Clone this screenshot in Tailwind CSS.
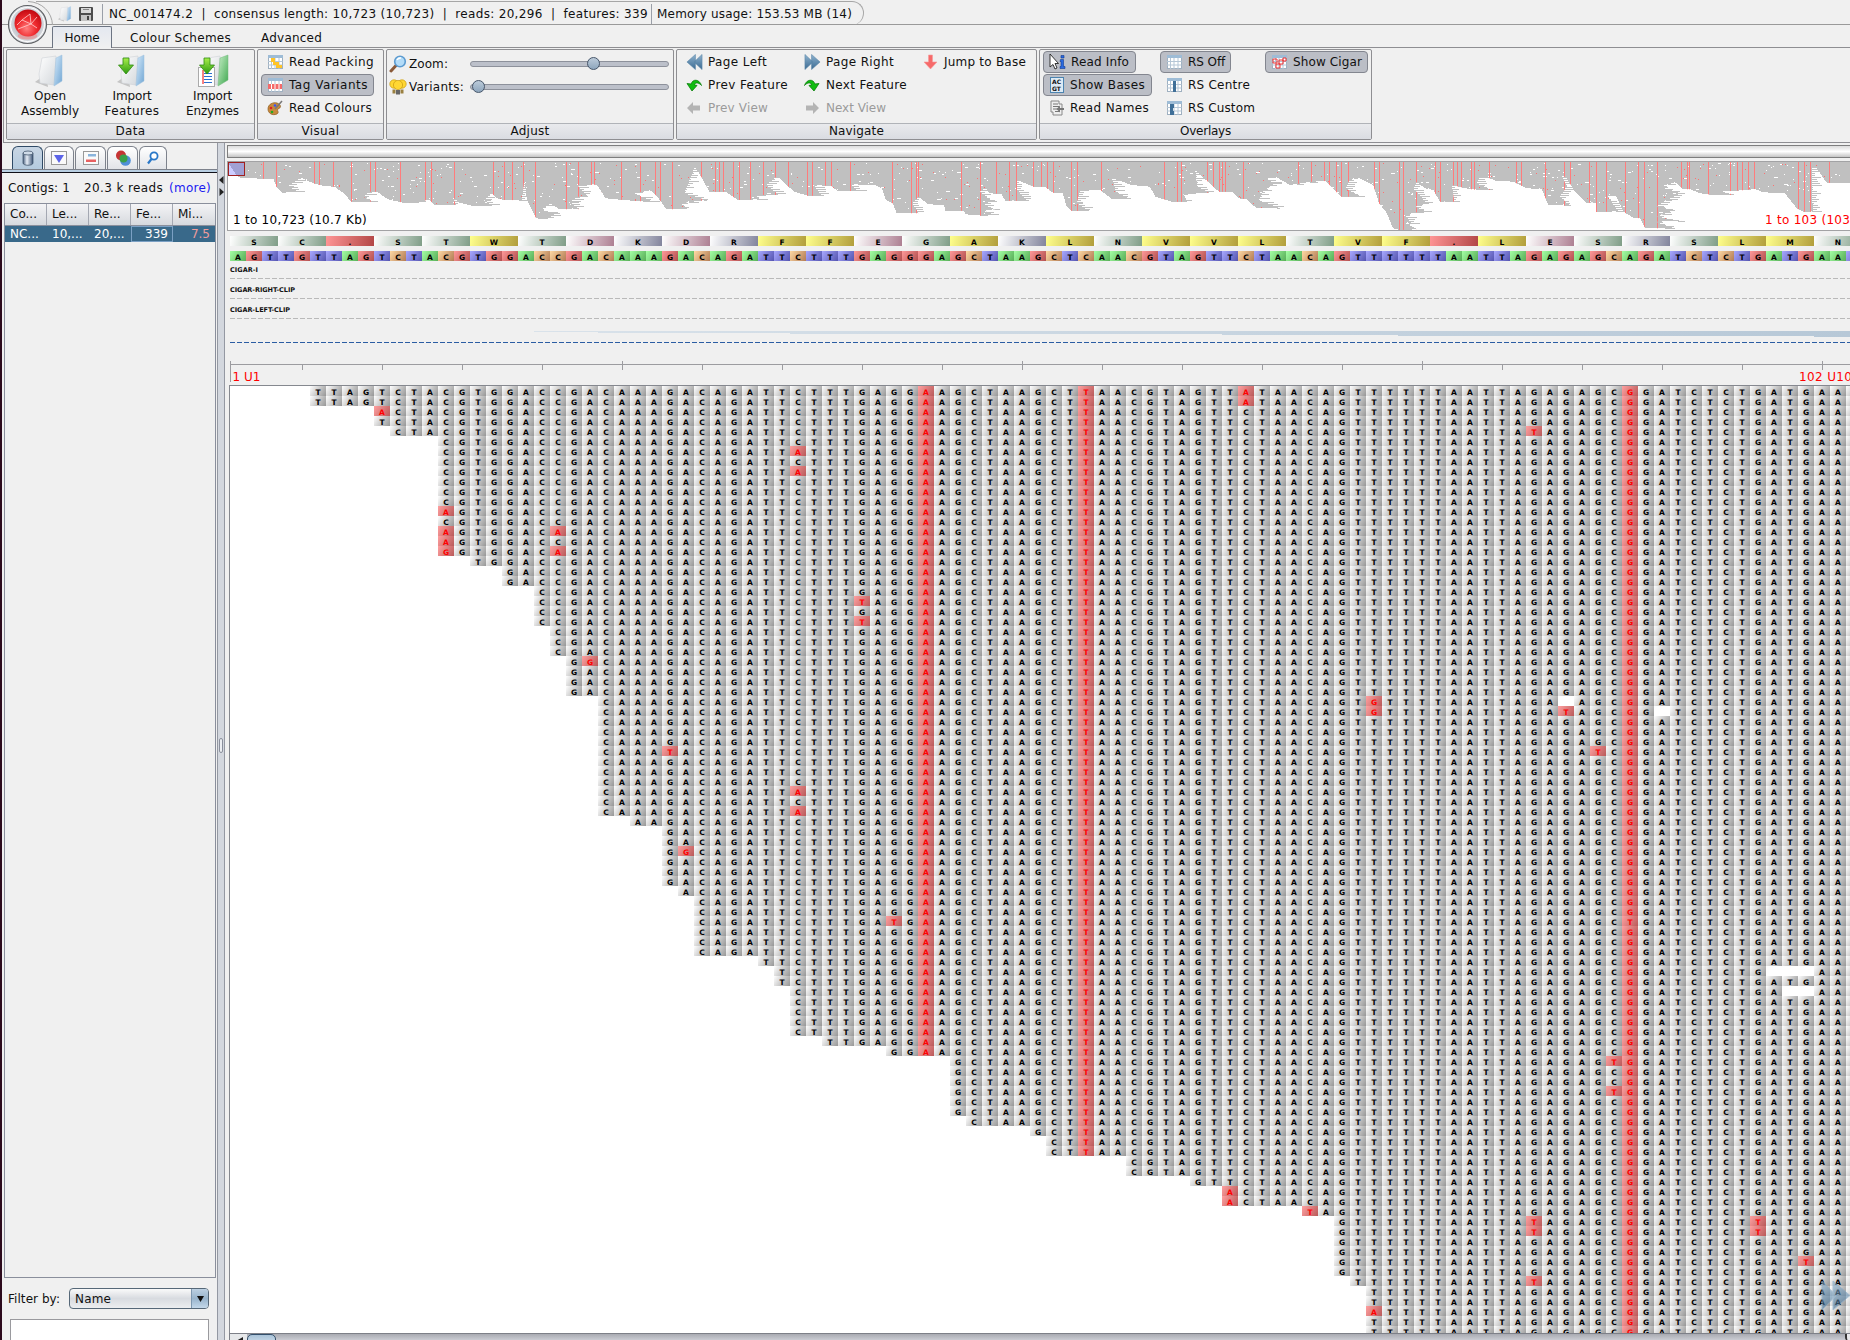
<!DOCTYPE html>
<html lang="en">
<head>
<meta charset="utf-8">
<title>Assembly viewer</title>
<script src="https://cdn.jsdelivr.net/npm/@tailwindcss/browser@4"></script>
</head>
<body class="overflow-hidden">
<svg class="absolute size-0">
  <defs>
    <linearGradient id="gBlue" x1="0" y1="0" x2="1" y2="1"><stop offset="0" stop-color="#d9ecfb"/><stop offset="1" stop-color="#6fa5d3"/></linearGradient>
    <linearGradient id="gGreen" x1="0" y1="0" x2="1" y2="1"><stop offset="0" stop-color="#c8efc8"/><stop offset="1" stop-color="#3fa850"/></linearGradient>
    <linearGradient id="gPaper" x1="0" y1="0" x2="1" y2="1"><stop offset="0" stop-color="#ffffff"/><stop offset="1" stop-color="#d4d8dc"/></linearGradient>
    <linearGradient id="gSteel" x1="0" y1="0" x2="0" y2="1"><stop offset="0" stop-color="#8fb3cf"/><stop offset="1" stop-color="#3a6a92"/></linearGradient>
    <linearGradient id="gArrow" x1="0" y1="0" x2="0" y2="1"><stop offset="0" stop-color="#a8ef4a"/><stop offset="1" stop-color="#2b9a10"/></linearGradient>
    <linearGradient id="gCyl" x1="0" y1="0" x2="1" y2="0"><stop offset="0" stop-color="#4d6380"/><stop offset=".4" stop-color="#e8eff8"/><stop offset="1" stop-color="#3c5373"/></linearGradient>
    <radialGradient id="gBall" cx=".45" cy=".7" r=".7"><stop offset="0" stop-color="#ff8080"/><stop offset=".5" stop-color="#f02c30"/><stop offset="1" stop-color="#c00810"/></radialGradient>
    <radialGradient id="gRing" cx=".5" cy=".5" r=".5"><stop offset=".6" stop-color="#b8bcc4"/><stop offset="1" stop-color="#e4e6ea"/></radialGradient>
    <symbol id="folder" viewBox="0 0 32 34">
      <path d="M1 28 L12 20 L14 33 Z" fill="#9a9a9a" opacity=".5"/>
      <path d="M8 4 L22 2 L20 31 L6 29 L5 20 Z" fill="url(#gPaper)" stroke="#cfd2d6" stroke-width=".6"/>
      <path d="M22 4 L28 1 L28 27 L20 32 Z" fill="url(#gBlue)" stroke="#9fc0dc" stroke-width=".5"/>
    </symbol>
    <symbol id="folderG" viewBox="0 0 32 34">
      <path d="M10 4 L22 2 L20 31 L8 29 Z" fill="url(#gPaper)" stroke="#cfd2d6" stroke-width=".6"/>
      <path d="M22 4 L30 1 L30 26 L20 32 Z" fill="url(#gGreen)" stroke="#72b97c" stroke-width=".5"/>
    </symbol>
    <symbol id="down" viewBox="0 0 16 18"><path d="M5 1 H11 V8 H15.5 L8 17 L.5 8 H5 Z" fill="url(#gArrow)" stroke="#2d8a12" stroke-width=".8"/></symbol>
    <symbol id="grid" viewBox="0 0 16 16">
      <rect x="1.5" y="1.5" width="14" height="13" fill="#fff" stroke="#9fb0c0"/>
      <rect x="1" y="1" width="15" height="3" fill="#9ebcd6"/>
      <path d="M1 7.5H15.5M1 11H15.5M4.5 4V15M8 4V15M12 4V15" stroke="#b5c6d6" stroke-width="1"/>
    </symbol>
    <symbol id="dblRight" viewBox="0 0 18 16">
      <path d="M1 0 L9.5 8 L1 16 Z M8 0 L17 8 L8 16 Z" fill="url(#gSteel)" stroke="#5a86a8" stroke-width=".6"/>
    </symbol>
    <symbol id="turn" viewBox="0 0 16 16">
      <path d="M15.5 8.5 C13.5 2 6.5 1.500 5.200 7 L1 6.500 L6 14 L11 8.500 L8.300 7.800 C9.500 5 13 5.500 15.500 8.500 Z" fill="#12bd12" stroke="#0a7d0a" stroke-width=".8"/>
    </symbol>
    <symbol id="greyArrow" viewBox="0 0 16 16"><path d="M1 8 L7 2 V5.500 H14 V10.500 H7 V14 Z" fill="#b4b4b4"/></symbol>
    <symbol id="lens" viewBox="0 0 18 18">
      <path d="M2 16 L7 10.500" stroke="#8a5a3a" stroke-width="3" stroke-linecap="round"/>
      <circle cx="11" cy="6.500" r="5.300" fill="#b4dcf8" stroke="#5c9bd0" stroke-width="1.600"/>
      <path d="M8 5 A4 4 0 0 1 12 3" stroke="#fff" stroke-width="1.400" fill="none"/>
    </symbol>
  </defs>
</svg>

<div class="flex h-[1340px] w-[1850px] overflow-hidden bg-[#f0f0f0] font-['DejaVu_Sans',sans-serif] text-[12px] leading-[14px] text-[#111]">
  <div class="w-[2px] shrink-0 bg-[#2c0a1c]"></div>
  <div class="flex min-w-0 flex-1 flex-col">

    <!-- title strip and ribbon tabs -->
    <header class="relative h-[47px] shrink-0">
      <div class="flex h-[25px] border-b border-[#9a9a9a]">
        <div class="mt-px ml-[34px] flex h-[24px] w-[828px] items-center rounded-r-[12px] border-t border-r border-[#a6a6a6] whitespace-pre">
          <svg class="ml-[21px] size-[16px]"><use href="#folder"/></svg>
          <svg class="ml-[5px] size-[16px]" viewBox="0 0 16 16"><rect x="1" y="1" width="14" height="14" rx="1" fill="#4c4c4c"/><rect x="3" y="2" width="10" height="5" fill="#d8d8d8"/><rect x="3" y="9" width="10" height="6" fill="#c4c4c4"/><rect x="5" y="3" width="6" height="1" fill="#888"/><rect x="9" y="10" width="2" height="4" fill="#444"/></svg>
          <span class="ml-[8px] h-[20px] w-px bg-[#9a9fa8]"></span>
          <span class="ml-[4px] w-[544px] pl-[2px]" data-w="539">NC_001474.2  |  consensus length: 10,723 (10,723)  |  reads: 20,296  |  features: 339</span>
          <span class="h-[20px] w-px bg-[#9a9fa8]"></span>
          <span class="ml-[5px]" data-w="195">Memory usage: 153.53 MB (14)</span>
        </div>
      </div>
      <div class="flex h-[22px] pl-[50px]">
        <div class="mt-px flex h-[22px] w-[60px] items-center justify-center rounded-t-[2px] border border-b-0 border-[#6c7482] bg-linear-to-b from-[#e4e8f0] to-[#f0f0f0]"><span data-w="35">Home</span></div>
        <div class="flex items-center pt-[3px] pl-[18px]"><span data-w="101">Colour Schemes</span></div>
        <div class="flex items-center pt-[3px] pl-[30px]"><span data-w="61">Advanced</span></div>
      </div>
      <svg class="absolute top-0 left-0 h-[47px] w-[56px]" viewBox="2 0 56 47">
        <path d="M28 1.500 C42 2 52 12 52.500 25" fill="none" stroke="#a6a6a6"/>
        <circle cx="27.500" cy="24.500" r="19" fill="url(#gRing)" stroke="#5e6064" stroke-width="1.200"/>
        <circle cx="27.500" cy="24.500" r="17" fill="none" stroke="#fff" stroke-width="1"/>
        <ellipse cx="27.500" cy="36" rx="10" ry="3.500" fill="#e89090" opacity=".7"/>
        <circle cx="28" cy="23" r="13.500" fill="url(#gBall)"/>
        <path d="M17 25 L22 20 L31 24 L37 17 M31 24 L30 14 L22 20 M31 24 L37 28 M18 29 L31 24" fill="none" stroke="#ffd0d0" stroke-width=".8"/>
      </svg>
    </header>

    <!-- ribbon -->
    <section class="ml-px flex h-[96px] shrink-0 gap-[2px] border-y border-l border-[#8e8e92] pt-px pl-[2px]">
      <div class="flex h-[91px] w-[249px] flex-col rounded-[2px] border border-[#8e8e92]">
        <div class="flex flex-1 pl-[3px]">
          <div class="flex w-[80px] flex-col items-center pt-[4px] leading-[15px]"><svg class="h-[34px] w-[32px]"><use href="#folder"/></svg><span class="mt-px" data-w="32">Open</span><span data-w="58">Assembly</span></div>
          <div class="flex w-[84px] flex-col items-center pt-[4px] leading-[15px]"><span class="relative h-[34px] w-[32px]"><svg class="h-[34px] w-[32px]"><use href="#folder"/></svg><svg class="absolute top-[3px] left-[2px] h-[18px] w-[16px]"><use href="#down"/></svg></span><span class="mt-px" data-w="39">Import</span><span data-w="55">Features</span></div>
          <div class="flex w-[77px] flex-col items-center pt-[4px] leading-[15px]"><span class="relative h-[34px] w-[34px]"><svg class="absolute right-0 h-[34px] w-[32px]"><use href="#folderG"/></svg><svg class="absolute top-[13px] left-[2px] h-[20px] w-[17px]" viewBox="0 0 17 20"><rect x=".5" y=".5" width="16" height="19" fill="#fff" stroke="#aaa"/><path d="M5 3V17" stroke="#e00" stroke-width="1"/><path d="M6 6.500H14M6 9.500H14M6 12.500H14M6 15.500H14" stroke="#2a6fd0" stroke-width="1.200"/></svg><svg class="absolute top-[3px] left-[3px] h-[18px] w-[16px]"><use href="#down"/></svg></span><span class="mt-px" data-w="39">Import</span><span data-w="53">Enzymes</span></div>
        </div>
        <div class="flex h-[16px] items-center justify-center border-t border-[#b0b3b8] bg-linear-to-b from-[#e9eaed] to-[#dadce2] pb-[2px]"><span data-w="30">Data</span></div>
      </div>

      <div class="flex h-[91px] w-[127px] flex-col rounded-[2px] border border-[#8e8e92]">
        <div class="flex flex-1 flex-col items-start gap-px pl-[3px]">
          <div class="flex h-[23px] items-center gap-[6px] pl-[6px]"><svg class="size-[16px]" viewBox="0 0 16 16"><use href="#grid"/><path d="M4 4h4v4h4v3h3v3h-6v-3h-3v-3h-2z" fill="#ffc428"/></svg><span data-w="85">Read Packing</span></div>
          <div class="flex h-[22px] w-[113px] items-center gap-[6px] rounded-[4px] border border-[#83868f] bg-[#bbbec6] pl-[5px]"><svg class="size-[16px]" viewBox="0 0 16 16"><use href="#grid"/><path d="M1 7h14v5H1z" fill="#f46a6a"/><path d="M4.500 7v5M8 7v5M12 7v5" stroke="#fff"/></svg><span data-w="79">Tag Variants</span></div>
          <div class="flex h-[22px] items-center gap-[6px] pl-[6px]"><svg class="size-[16px]" viewBox="0 0 16 16"><path d="M1 9 C1 4 6 2 10 3 C15 5 14 8 11 9 C9 10 13 12 10 14 C5 16 1 13 1 9Z" fill="#c88a3c" stroke="#8a5a1c" stroke-width=".7"/><circle cx="4" cy="8" r="1.300" fill="#d22"/><circle cx="5" cy="12" r="1.300" fill="#2a2"/><circle cx="8" cy="5.500" r="1.300" fill="#35f"/><path d="M8 9L15 1" stroke="#777" stroke-width="1.500"/></svg><span data-w="83">Read Colours</span></div>
        </div>
        <div class="flex h-[16px] items-center justify-center border-t border-[#b0b3b8] bg-linear-to-b from-[#e9eaed] to-[#dadce2] pb-[2px]"><span data-w="38">Visual</span></div>
      </div>

      <div class="flex h-[91px] w-[288px] flex-col rounded-[2px] border border-[#8e8e92]">
        <div class="flex flex-1 flex-col gap-px pt-[3px] pl-[2px]">
          <div class="flex h-[22px] items-center"><svg class="size-[18px]"><use href="#lens"/></svg><span class="ml-[2px] w-[61px]"><span data-w="39">Zoom:</span></span>
            <span class="relative h-[6px] w-[199px] rounded-[3px] border border-[#8d919b] bg-[#bcc0ca]"><span class="absolute -top-[5px] left-[116px] size-[13px] rounded-full border-[1.5px] border-[#46566a] bg-linear-to-b from-[#bccbda] to-[#8ea6bd]"></span></span></div>
          <div class="flex h-[22px] items-center"><svg class="size-[18px]" viewBox="0 0 18 18"><g fill="#ffd733" stroke="#c99a10" stroke-width=".7"><circle cx="5" cy="6" r="4.200"/><circle cx="13" cy="6" r="4.200"/><circle cx="9" cy="7" r="4.600"/></g><path d="M3.500 11.500h3v4h-3zM11.500 11.500h3v4h-3z" fill="#9a8040"/><path d="M7 12h4v4.500H7z" fill="#666"/></svg><span class="ml-[2px] w-[61px]"><span data-w="55">Variants:</span></span>
            <span class="relative h-[6px] w-[199px] rounded-[3px] border border-[#8d919b] bg-[#bcc0ca]"><span class="absolute -top-[5px] left-[1px] size-[13px] rounded-full border-[1.5px] border-[#46566a] bg-linear-to-b from-[#bccbda] to-[#8ea6bd]"></span></span></div>
        </div>
        <div class="flex h-[16px] items-center justify-center border-t border-[#b0b3b8] bg-linear-to-b from-[#e9eaed] to-[#dadce2] pb-[2px]"><span data-w="39">Adjust</span></div>
      </div>

      <div class="flex h-[91px] w-[361px] flex-col rounded-[2px] border border-[#8e8e92]">
        <div class="grid flex-1 grid-cols-[118px_119px_110px] grid-rows-[23px_23px_23px] content-start items-center pl-[9px]">
          <div class="flex items-center gap-[5px]"><svg class="h-[16px] w-[17px] -scale-x-100"><use href="#dblRight"/></svg><span data-w="59">Page Left</span></div>
          <div class="flex items-center gap-[5px]"><svg class="h-[16px] w-[17px]"><use href="#dblRight"/></svg><span data-w="68">Page Right</span></div>
          <div class="flex items-center gap-[6px]"><svg class="h-[16px] w-[15px]" viewBox="0 0 15 16"><path d="M5.500 1h4v7H14l-6.500 7L1 8h4.500z" fill="#f66a6a" stroke="#f79a9a" stroke-width=".6"/></svg><span data-w="82">Jump to Base</span></div>
          <div class="flex items-center gap-[6px]"><svg class="size-[16px]"><use href="#turn"/></svg><span data-w="80">Prev Feature</span></div>
          <div class="flex items-center gap-[6px]"><svg class="size-[16px] -scale-x-100"><use href="#turn"/></svg><span data-w="81">Next Feature</span></div>
          <div></div>
          <div class="flex items-center gap-[6px] text-[#9b9b9b]"><svg class="size-[16px]"><use href="#greyArrow"/></svg><span data-w="60">Prev View</span></div>
          <div class="flex items-center gap-[6px] text-[#9b9b9b]"><svg class="size-[16px] -scale-x-100"><use href="#greyArrow"/></svg><span data-w="60">Next View</span></div>
        </div>
        <div class="flex h-[16px] items-center justify-center border-t border-[#b0b3b8] bg-linear-to-b from-[#e9eaed] to-[#dadce2] pb-[2px]"><span data-w="55">Navigate</span></div>
      </div>

      <div class="flex h-[91px] w-[333px] flex-col rounded-[2px] border border-[#8e8e92]">
        <div class="grid flex-1 grid-cols-[117px_105px_104px] grid-rows-[22px_22px_22px] content-start items-center justify-items-start gap-y-px pt-px pl-[3px]">
          <div class="flex h-[22px] w-[93px] items-center gap-[5px] rounded-[4px] border border-[#83868f] bg-[#bbbec6] pl-[5px]"><svg class="h-[18px] w-[17px]" viewBox="0 0 17 18"><path d="M1 1V14L4 11.500L6 16L8 15L6 10.500H9.500Z" fill="#fff" stroke="#222" stroke-width=".9"/><path d="M11.500 6.500h3v7h1.500v2h-5v-2h1v-5h-1zM12 2.500h3v2.500h-3z" fill="#2a6ae0" stroke="#123a90" stroke-width=".6"/></svg><span data-w="58">Read Info</span></div>
          <div class="flex h-[22px] w-[71px] items-center gap-[6px] rounded-[4px] border border-[#83868f] bg-[#bbbec6] pl-[5px]"><svg class="size-[16px]"><use href="#grid"/></svg><span data-w="37">RS Off</span></div>
          <div class="flex h-[22px] w-[103px] items-center gap-[6px] rounded-[4px] border border-[#83868f] bg-[#bbbec6] pl-[5px]"><svg class="size-[16px]" viewBox="0 0 16 16"><use href="#grid"/><path d="M2 5h4v4H2zM5 10h4v4H5zM8 6h4v4H8zM12 4h3v3h-3z" fill="none" stroke="#e33"/></svg><span data-w="69">Show Cigar</span></div>
          <div class="flex h-[22px] w-[109px] items-center gap-[5px] rounded-[4px] border border-[#83868f] bg-[#bbbec6] pl-[5px]"><svg class="h-[16px] w-[16px]" viewBox="0 0 16 16"><rect x="1.500" y=".5" width="13" height="15" fill="#dceaf5" stroke="#4c84b0"/><g class="text-[6px] font-bold" fill="#111"><text x="3" y="7">AC</text><text x="3" y="14">GT</text></g></svg><span data-w="75">Show Bases</span></div>
          <div class="flex items-center gap-[6px] pl-[6px]"><svg class="size-[16px]" viewBox="0 0 16 16"><use href="#grid"/><path d="M7 4h3v11H7z" fill="#3f6f98"/></svg><span data-w="62">RS Centre</span></div>
          <div></div>
          <div class="flex items-center gap-[5px] pl-[6px]"><svg class="size-[16px]" viewBox="0 0 16 16"><path d="M2 1h8v3h3v11H4V12H2z" fill="#eee" stroke="#888"/><path d="M4 4h5M4 6.500h6M4 9h5M6 11.500h5" stroke="#777"/><path d="M15 8H11v-2.500L7.500 9l3.500 3.500V10h4z" fill="#777"/></svg><span data-w="79">Read Names</span></div>
          <div class="flex items-center gap-[6px] pl-[6px]"><svg class="size-[16px]" viewBox="0 0 16 16"><use href="#grid"/><path d="M4 4h4v4H4zM4 11h4v4H4zM4 8h3v3H4z" fill="#3f6f98"/></svg><span data-w="67">RS Custom</span></div>
        </div>
        <div class="flex h-[16px] items-center justify-center border-t border-[#b0b3b8] bg-linear-to-b from-[#e9eaed] to-[#dadce2] pb-[2px]"><span data-w="51">Overlays</span></div>
      </div>
    </section>

    <main class="flex min-h-0 flex-1">
      <!-- contig list -->
      <aside class="flex w-[215px] shrink-0 flex-col">
        <div class="flex h-[26px] shrink-0 items-end gap-px pt-[3px] pl-[10px]">
          <div class="flex h-[23px] w-[31px] items-center justify-center rounded-t-[6px] border border-b-0 border-[#2f4a66] bg-linear-to-b from-[#c9d6e4] to-[#b4cade]"><svg class="size-[16px]" viewBox="0 0 16 16"><path d="M3 3v10c0 3 10 3 10 0V3z" fill="url(#gCyl)" stroke="#34485e" stroke-width=".7"/><ellipse cx="8" cy="3" rx="5" ry="2" fill="#cfdbe8" stroke="#34485e" stroke-width=".7"/></svg></div>
          <div class="flex h-[23px] w-[30px] items-center justify-center rounded-t-[6px] border border-b-0 border-[#7d828c] bg-linear-to-b from-white to-[#e2e4e8]"><svg class="size-[16px] shrink-0" viewBox="0 0 16 16"><rect x=".5" y="1.500" width="15" height="13" fill="#fafafa" stroke="#999"/><path d="M3 5h10l-5 8z" fill="#5c64e8"/></svg></div>
          <div class="flex h-[23px] w-[31px] items-center justify-center rounded-t-[6px] border border-b-0 border-[#7d828c] bg-linear-to-b from-white to-[#e2e4e8]"><svg class="size-[16px]" viewBox="0 0 16 16"><rect x=".5" y="1.500" width="15" height="13" fill="#fafafa" stroke="#999"/><path d="M5 4h8v2.500H5z" fill="#8ab4dc"/><path d="M3 9.500h10V12H3z" fill="#e86060"/></svg></div>
          <div class="flex h-[23px] w-[31px] items-center justify-center rounded-t-[6px] border border-b-0 border-[#7d828c] bg-linear-to-b from-white to-[#e2e4e8]"><svg class="size-[16px]" viewBox="0 0 16 16"><circle cx="6" cy="5.500" r="5" fill="#c63434"/><circle cx="10.500" cy="10.500" r="5.300" fill="#4f8fd8"/><circle cx="8.500" cy="8.500" r="4" fill="#3aa04a"/></svg></div>
          <div class="flex h-[23px] w-[28px] items-center justify-center rounded-t-[6px] border border-b-0 border-[#7d828c] bg-linear-to-b from-white to-[#e2e4e8]"><svg class="size-[14px]" viewBox="0 0 14 14"><circle cx="8" cy="5" r="3.600" fill="#fff" stroke="#2a78c8" stroke-width="1.800"/><path d="M5.500 8L2 12.500" stroke="#2a78c8" stroke-width="2.200"/></svg></div>
        </div>
        <div class="h-[4px] shrink-0 border-t border-b border-t-[#7d828c] border-b-[#101018] bg-[#b9cfe2]"></div>
        <div class="flex h-[30px] shrink-0 items-center pb-px pl-[6px] whitespace-pre"><span class="w-[76px]"><span data-w="62">Contigs: 1</span></span><span class="w-[85px]"><span data-w="79">20.3 k reads</span></span><span class="text-[#1a1af0]" data-w="42">(more)</span></div>
        <div class="ml-[2px] h-[1075px] w-[212px] shrink-0 border border-[#8a8f9c]">
          <div class="grid h-[22px] grid-cols-[42px_42px_42px_42px_42px] border-b border-[#8a8f9c] bg-linear-to-b from-[#f4f4f6] to-[#d6d9de]">
            <span class="flex items-center border-r border-[#a4a8b2] pb-px pl-[5px]">Co...</span><span class="flex items-center border-r border-[#a4a8b2] pb-px pl-[5px]">Le...</span><span class="flex items-center border-r border-[#a4a8b2] pb-px pl-[5px]">Re...</span><span class="flex items-center border-r border-[#a4a8b2] pb-px pl-[5px]">Fe...</span><span class="flex items-center pb-px pl-[5px]">Mi...</span>
          </div>
          <div class="grid h-[16px] grid-cols-[42px_42px_42px_42px_42px] bg-[#39698a] text-white">
            <span class="flex items-center pl-[5px]">NC...</span><span class="flex items-center pl-[5px]">10,...</span><span class="flex items-center pl-[5px]">20,...</span><span class="flex items-center justify-end border border-[#7ba0c4] pr-[4px]">339</span><span class="flex items-center justify-end pr-[5px] text-[#ef9c9c]">7.5</span>
          </div>
        </div>
        <div class="mt-[10px] flex h-[21px] shrink-0 items-center pl-[6px]"><span class="w-[61px]"><span data-w="52">Filter by:</span></span>
          <div class="flex h-[21px] w-[140px] items-center overflow-hidden rounded-[4px] border border-[#566878] bg-linear-to-b from-[#fafafa] via-[#d8dbe0] to-[#eceef0] pl-[5px]"><span data-w="36">Name</span><span class="ml-auto flex h-full w-[17px] items-center justify-center border-l border-[#7e98b0] bg-linear-to-b from-[#bcd0e2] via-[#98b4cc] to-[#c4d8ea]"><svg class="h-[6px] w-[7px]" viewBox="0 0 7 6"><path d="M0 0h7L3.500 6z" fill="#111"/></svg></span></div>
        </div>
        <div class="mt-[10px] ml-[8px] h-[30px] w-[199px] shrink-0 border border-[#9a9a9e] bg-white"></div>
      </aside>

      <!-- splitter -->
      <div class="flex w-[8px] shrink-0 flex-col items-center border-x border-[#9498a2] bg-[#d3d7de]">
        <svg class="mt-[32px] h-[22px] w-[5px]" viewBox="0 0 5 22"><path d="M4.500 1v8L0 5z M.5 13v8L5 17z" fill="#222"/></svg>
        <span class="mt-[541px] h-[15px] w-[4px] rounded-full border border-[#8a8f9c] bg-[#eceef2]"></span>
      </div>

      <div class="flex min-w-0 flex-1 flex-col">
        <div class="mt-[2px] ml-[2px] h-[13px] shrink-0 border-y border-l border-[#7e7e7e] bg-linear-to-b from-[#dcdcdc] via-white to-[#c4c4c4]"></div>
        <!-- overview -->
        <div class="relative mt-[3px] ml-[2px] h-[70px] shrink-0 overflow-hidden border-y border-l border-[#a2a2a4] bg-white">
          <svg id="overview" class="absolute -top-px -left-px h-[70px] w-[1623px]" viewBox="227 161 1623 70" shape-rendering="crispEdges"></svg>
          <span class="absolute top-[51px] left-[5px] text-black" data-w="134">1 to 10,723 (10.7 Kb)</span>
          <span class="absolute top-[51px] left-[1537px] w-max text-[#f00]" data-w="110">1 to 103 (103 bp)</span>
        </div>

        <div id="protein" class="mt-[5px] ml-[5px] flex h-[10px] shrink-0 overflow-hidden text-[7.5px] leading-[13px] font-bold text-black"></div>
        <div id="consensus" class="mt-[5px] ml-[5px] flex h-[10px] shrink-0 overflow-hidden text-[7.5px] leading-[13px] font-bold text-black"></div>

        <div class="ml-[5px] flex h-[17px] shrink-0 items-end pb-[3px] text-[6.5px] leading-[9px] font-bold"><span data-w="28" data-font="bold 6.5px">CIGAR-I</span></div>
        <div class="ml-[5px] h-px shrink-0 bg-[repeating-linear-gradient(90deg,#b9b9b9_0_5px,transparent_5px_7px)]"></div>
        <div class="ml-[5px] flex h-[19px] shrink-0 items-end pb-[3px] text-[6.5px] leading-[9px] font-bold"><span data-w="65" data-font="bold 6.5px">CIGAR-RIGHT-CLIP</span></div>
        <div class="ml-[5px] h-px shrink-0 bg-[repeating-linear-gradient(90deg,#b9b9b9_0_5px,transparent_5px_7px)]"></div>
        <div class="ml-[5px] flex h-[19px] shrink-0 items-end pb-[3px] text-[6.5px] leading-[9px] font-bold"><span data-w="60" data-font="bold 6.5px">CIGAR-LEFT-CLIP</span></div>
        <div class="ml-[5px] h-px shrink-0 bg-[repeating-linear-gradient(90deg,#b9b9b9_0_5px,transparent_5px_7px)]"></div>

        <!-- coverage and scale -->
        <svg class="ml-[5px] h-[66px] w-[1620px] shrink-0" viewBox="230 319 1620 66" shape-rendering="crispEdges">
          <defs><linearGradient id="cov" gradientUnits="userSpaceOnUse" x1="534" x2="1850" y1="0" y2="0"><stop offset="0" stop-color="#d9e2ea"/><stop offset="1" stop-color="#b7c8d7"/></linearGradient></defs>
          <path d="M534 331H1850V337H1814V336H1398V335H1222V334H790V333H598V332H534Z" fill="url(#cov)"/>
          <path d="M230 342.500H1850" stroke="#2b5da3" stroke-dasharray="5 2"/>
          <g id="ruler" stroke="#9c9ca0"><path d="M230 364.500H1850M230.500 361V382"/></g>
          <g fill="#f00" class="text-[12px]"><text x="232.500" y="381" textLength="28">1 U1</text><text x="1799" y="381" textLength="61">102 U102</text></g>
        </svg>

        <!-- reads -->
        <div class="relative ml-[4px] h-[948px] shrink-0 overflow-hidden border-t border-l border-[#85888f] bg-white">
          <div id="reads" class="w-[1640px] text-[7.5px] leading-[13px] font-bold text-black"></div>
          <svg class="absolute top-[894px] left-[1591px] h-[31px] w-[32px] opacity-60" viewBox="0 0 32 31"><path d="M1 1L15 15.500L1 30ZM12 1L29 15.500L12 30Z" fill="url(#gSteel)" stroke="#7fa6c6"/></svg>
        </div>
        <div class="ml-[4px] flex h-[8px] shrink-0 overflow-hidden border-t border-l border-[#7d8088] bg-linear-to-b from-[#a9abb2] to-[#cfd1d8]">
          <span class="flex w-[17px] justify-end bg-[#e6e8ea] pr-[4px]"><svg class="mt-[3px] h-[8px] w-[7px]" viewBox="0 0 7 8"><path d="M7 0v8L0 4z" fill="#222"/></svg></span>
          <span class="h-[14px] w-[29px] rounded-[5px] border border-[#34506c] bg-linear-to-b from-[#a9c2d8] to-[#e0ecf6]"></span>
          <span class="ml-auto w-[5px] rounded-bl-[4px] border-l-2 border-[#333] bg-[#e9e9eb]"></span>
        </div>
      </div>
    </main>
  </div>
</div>

<script>
const SEQ = "AGTTGTTAGTCTACGTGGACCGACAAAGACAGATTCTTTGAGGGAGCTAAGCTCAACGTAGTTCTAACAGTTTTTTAATTAGAGAGCAGATCTCTGATGAAT";
const AMINO = "SC.STWTDKDRFFEGAKLNVVLTVF.LESRSLMN";

const BASE = {
  A: "w-[16px] h-[10px] shrink-0 text-center bg-[linear-gradient(122deg,#a4ffa4,#58ae58)]",
  C: "w-[16px] h-[10px] shrink-0 text-center bg-[linear-gradient(122deg,#ffd9a4,#b27c55)]",
  G: "w-[16px] h-[10px] shrink-0 text-center bg-[linear-gradient(122deg,#ff9999,#b25050)]",
  T: "w-[16px] h-[10px] shrink-0 text-center bg-[linear-gradient(122deg,#a8a8ff,#5555b0)]"
};
const PROT = {
  green: "w-[48px] h-[10px] shrink-0 text-center bg-[linear-gradient(102deg,#ffffff,#7f9d87)]",
  yellow: "w-[48px] h-[10px] shrink-0 text-center bg-[linear-gradient(102deg,#ffff8c,#b29e3c)]",
  red: "w-[48px] h-[10px] shrink-0 text-center bg-[linear-gradient(102deg,#ff9696,#b24646)]",
  pink: "w-[48px] h-[10px] shrink-0 text-center bg-[linear-gradient(102deg,#ffffff,#ad7f92)]",
  blue: "w-[48px] h-[10px] shrink-0 text-center bg-[linear-gradient(102deg,#ffffff,#82849c)]"
};
const READ = "w-[16px] h-[10px] shrink-0 text-center bg-[linear-gradient(122deg,#ffffff,#969696)]";
const VARIANT = "w-[16px] h-[10px] shrink-0 text-center text-[#f00] bg-[linear-gradient(122deg,#ffa0a0,#b95a5a)]";
const GAP = "w-[16px] h-[10px] shrink-0 bg-white";

const group = a => a === "." ? "red" : "DE".includes(a) ? "pink" : "KR".includes(a) ? "blue" : "SCTGN".includes(a) ? "green" : "yellow";
const cell = (cls, t) => `<span class="${cls}">${t}</span>`;

document.getElementById("protein").innerHTML = [...AMINO].map(a => cell(PROT[group(a)], a)).join("");
document.getElementById("consensus").innerHTML = [...SEQ].map(b => cell(BASE[b], b)).join("");

// [first base, number of reads that start there]
const RUNS = [[5,2],[9,2],[10,1],[13,12],[15,1],[17,2],[19,4],[20,3],[21,4],[23,12],[25,1],[27,6],[28,1],[29,6],[33,1],[34,2],[35,5],[37,1],[41,1],[45,6],[46,1],[50,1],[51,2],[56,2],[60,1],[62,2],[67,1],[69,6],[70,1],[71,5]];
const SNP = {};
[[2,9,"A"],[12,13,"A"],[14,13,"A"],[15,13,"A"],[16,13,"G"],[14,20,"A"],[16,20,"A"],[27,22,"G"],[6,35,"A"],[8,35,"A"],[21,39,"T"],[23,39,"T"],
 [0,63,"A"],[1,63,"A"],[4,81,"T"],[36,27,"T"],[40,35,"A"],[42,35,"A"],[46,28,"G"],[53,41,"T"],[31,71,"G"],[32,71,"G"],[32,83,"T"],[36,85,"T"],
 [53,87,"T"],[67,86,"T"],[70,86,"T"],[80,62,"A"],[81,62,"A"],[82,67,"T"],[92,71,"A"],[83,81,"T"],[84,81,"T"],[83,95,"T"],[84,95,"T"],[87,98,"T"],[89,81,"T"],
 [31,83," "],[32,89," "],[58,96," "],[58,97," "],[58,98," "],[60,97," "],[60,98," "]].forEach(([r, c, b]) => SNP[r + "," + c] = b);
const COMMON = { 43: "A", 53: "T", 87: "G" };

let html = "", row = 0;
for (const [start, count] of RUNS) for (let k = 0; k < count; k++, row++) {
  html += `<div class="flex h-[10px]" style="margin-left:${start * 16}px">`;
  for (let c = start; c < SEQ.length; c++) {
    const v = SNP[row + "," + c] || COMMON[c];
    html += v === " " ? cell(GAP, "") : v ? cell(VARIANT, v) : cell(READ, SEQ[c]);
  }
  html += "</div>";
}
document.getElementById("reads").innerHTML = html;

let ticks = "";
for (let x = 302; x < 1850; x += 80) ticks += `<path d="M${x + .5} ${(x - 622) % 400 === 0 ? 361 : 364}V370"/>`;
document.getElementById("ruler").insertAdjacentHTML("beforeend", ticks);

// Overview outline, in three stretches with their own origin and scale
const OUT = [
  [220, 2.8, [22,37,48,78,60,84,120,86,150,88,158,110,175,128,220,125,190,110,215,90,230,85,262,100,290,108,320,110,345,128,368,155,428,155,400,140,420,125,440,125,470,148,520,160,550,160,585,148,600,164,662,164,650,140,670,158,710,168,765,168,740,150,760,130,780,148,845,152,852,90,860,150,885,205,915,208,940,190,900,180,925,160,950,178,1005,178,980,155,1000,140,1030,140,1000,105,1055,104,1080,145,1130,150,1215,157,1160,130,1210,120,1175,80,1230,148,1250,178,1310,178,1290,160,1360,150,1300,130,1330,50,1350,85,1370,125,1415,125,1450,150,1510,148,1500,135,1565,135,1530,105,1558,80]],
  [780, 2.529, [0,85,35,125,70,137,105,137,85,105,130,108,145,123,195,123,180,103,240,105,258,115,268,150,285,160,295,190,350,190,335,160,350,140,375,163,415,165,418,182,465,182,470,193,510,197,545,196,515,180,545,178,515,165,535,152,505,125,520,115,530,130,560,132,570,152,625,152,600,120,600,90,640,110,670,110,690,128,715,128,725,170,738,183,782,182,750,160,760,120,810,120,840,148,885,148,850,125,840,85,890,105,935,110,950,140,990,155,1030,155,1020,133,1085,128,1055,110,1050,60,1100,115,1110,125,1145,125,1160,145,1180,148,1205,175,1265,175,1210,150,1225,120,1250,100,1230,85,1260,85,1290,105,1345,95,1380,93,1410,130,1420,140,1470,140,1430,115,1440,90,1465,85,1500,105,1515,160,1535,190,1550,235,1567,240]],
  [1400, 3, [0,240,50,238,10,215,35,220,15,195,50,187,85,187,45,170,80,160,40,115,50,95,75,115,100,120,120,155,163,155,155,105,210,118,275,120,230,100,240,80,270,85,285,92,340,95,380,115,425,117,445,165,510,167,480,140,500,110,485,75,500,85,525,125,560,158,588,158,588,186,655,184,620,135,650,140,670,185,700,203,720,205,735,233,830,237,765,215,845,213,770,200,820,180,770,170,800,150,840,130,780,110,830,95,800,70,850,118,870,118,900,130,940,135,1010,135,960,125,1040,120,1065,117,1090,127,1155,130,1190,175,1210,185,1238,185,1235,50,1250,55,1280,98,1352,100]]
];
let d = "M229 162";
for (const [ox, s, p] of OUT) for (let i = 0; i < p.length; i += 2) d += `L${(ox + p[i] / s).toFixed(1)} ${(150 + p[i + 1] / 3).toFixed(1)}`;
d += "V162Z";

const RED = [
  [220, 2.8, [121,158,264,278,316,368,421,435,505,573,592,656,763,796,817,848,883,970,1003,1038,1046,1124,1177,1219,1232,1265,1348,1387,1398,1409,1435,1454,1485,1519,1555]],
  [780, 2.529, [21,69,82,113,130,176,284,332,345,350,458,506,547,580,598,641,661,674,691,737,752,813,972,1005,1015,1081,1096,1111,1117,1126,1172,1311,1344,1377,1389,1405,1420,1437,1503,1515,1565]],
  [1400, 3, [10,49,104,121,160,172,184,214,223,268,347,364,436,493,510,566,587,619,676,715,733,770,844,862,868,925,991,1012,1027,1045,1063,1195,1213,1231,1288]]
];
let seed = 7;
const rnd = () => (seed = (seed * 16807) % 2147483647) / 2147483647;
let red = "", white = "", dots = "", stubs = "";
for (const [ox, s, xs] of RED) for (const x of xs) red += `M${Math.round(ox + x / s)}.5 162V230`;
for (let i = 0; i < 900; i++) white += `M${246 + Math.floor(rnd() * 1600)} ${163 + Math.floor(rnd() * 58)}.5h${1 + Math.floor(rnd() * rnd() * 4)}`;
for (let i = 0; i < 420; i++) dots += `M${246 + Math.floor(rnd() * 1600)} ${163 + Math.floor(rnd() * 60)}.5h1`;
for (const [ox, s, p] of OUT) for (let i = 2; i < p.length; i += 2) {
  const x0 = p[i - 2], y0 = p[i - 1], x1 = p[i], y1 = p[i + 1];
  if (y1 < y0 - 6) for (let y = y1; y < y0; y += 6) {
    const x = x0 + (x1 - x0) * (y0 - y) / (y0 - y1);
    stubs += `M${Math.round(ox + x / s) - 2} ${Math.round(150 + y / 3)}.5h${3 + Math.floor(rnd() * 10)}`;
  }
}
document.getElementById("overview").innerHTML =
  `<clipPath id="sky"><path d="${d}"/></clipPath><path d="${d}" fill="#c0c0c0"/><path d="${stubs}" stroke="#c0c0c0"/>` +
  `<g clip-path="url(#sky)" fill="none"><path d="${white}" stroke="#fff"/><path d="${dots}" stroke="#ff7070"/><path d="${red}" stroke="#ff7c7c"/></g>` +
  `<rect x="228.500" y="162.500" width="16" height="13" fill="#6060ff" fill-opacity=".32" stroke="#a02020"/>`;

// Spread each label over its nominal width
const ctx = document.createElement("canvas").getContext("2d");
document.querySelectorAll("[data-w]").forEach(el => {
  ctx.font = (el.dataset.font || "12px") + ' "DejaVu Sans"';
  const t = el.textContent;
  el.style.letterSpacing = ((+el.dataset.w - ctx.measureText(t).width) / t.length).toFixed(3) + "px";
});
</script>
</body>
</html>
